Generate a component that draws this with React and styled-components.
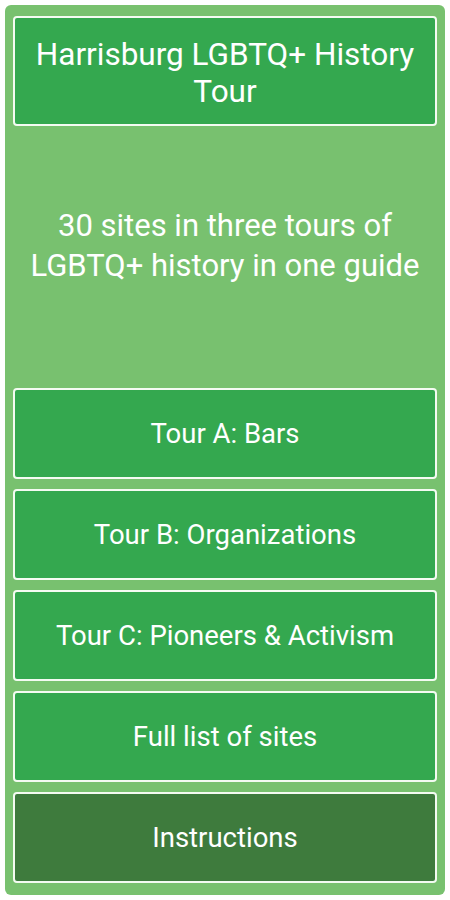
import React from 'react';
import styled, { createGlobalStyle } from 'styled-components';

const GlobalStyle = createGlobalStyle`
  body {
    margin: 0;
    background-color: #ffffff;
    font-family: Roboto, "Liberation Sans", sans-serif;
  }
`;

const Panel = styled.div`
  box-sizing: border-box;
  margin: 5px;
  width: 440px;
  height: 890px;
  padding: 11px 8px 12px 8px;
  background-color: #78c16f;
  border-radius: 6px;
  display: flex;
  flex-direction: column;
  gap: 10px;
`;

const Box = styled.div`
  box-sizing: border-box;
  flex: 0 0 auto;
  height: ${({ tall }) => (tall ? '110px' : '91px')};
  border: 2px solid #f4fbf2;
  border-radius: 4px;
  background-color: ${({ dark }) => (dark ? '#3e7b3d' : '#34a84f')};
  color: #ffffff;
  display: flex;
  align-items: center;
  justify-content: center;
  text-align: center;
  cursor: pointer;
`;

const Title = styled.h1`
  margin: 0;
  font-weight: normal;
  font-size: 31.5px;
  line-height: 37px;
  padding: 3px 8px 0 8px;
`;

const Label = styled.span`
  font-size: 27.5px;
`;

const Intro = styled.div`
  flex: 1;
  display: flex;
  align-items: center;
  justify-content: center;
  text-align: center;
  color: #ffffff;
  font-size: 31px;
  line-height: 40px;
  padding: 0 0 22px 0;
`;

const links = [
  { label: 'Tour A: Bars' },
  { label: 'Tour B: Organizations' },
  { label: 'Tour C: Pioneers & Activism' },
  { label: 'Full list of sites' },
  { label: 'Instructions', dark: true }
];

const App = () => (
  <>
    <GlobalStyle />
    <Panel>
      <Box tall>
        <Title>Harrisburg LGBTQ+ History Tour</Title>
      </Box>
      <Intro>30 sites in three tours of LGBTQ+ history in one guide</Intro>
      {links.map(link => (
        <Box key={link.label} dark={link.dark}>
          <Label>{link.label}</Label>
        </Box>
      ))}
    </Panel>
  </>
);

export default App;
